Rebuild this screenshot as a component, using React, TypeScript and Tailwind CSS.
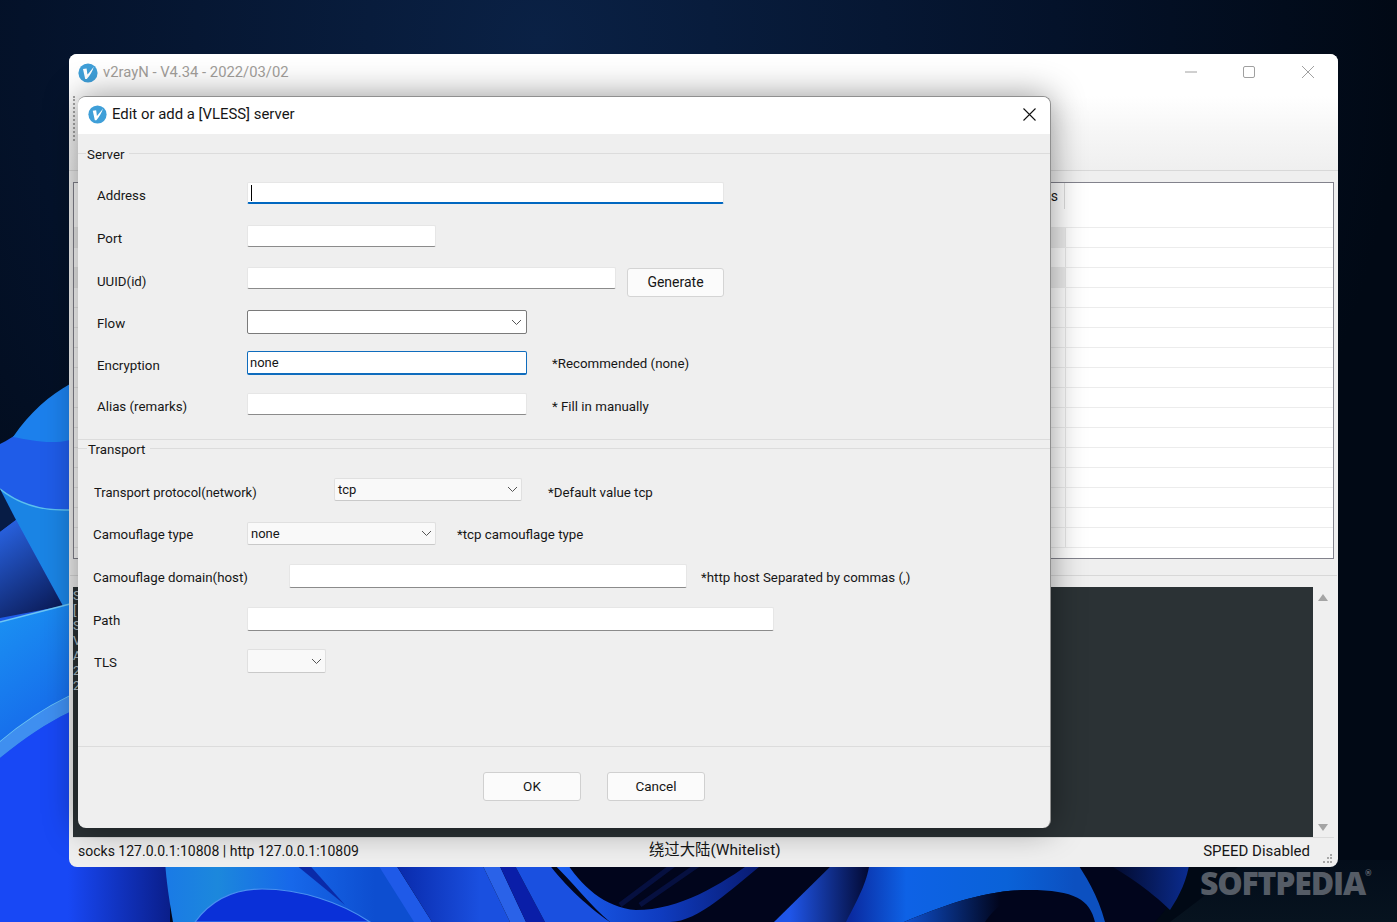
import type { ReactNode } from "react";

const FONT = "[font-family:'Roboto','Noto_Sans_CJK_SC',sans-serif]";

function Logo({ size = 20 }: { size?: number }) {
  return (
    <svg width={size} height={size} viewBox="0 0 20 20" className="shrink-0">
      <circle cx="10" cy="10" r="9.6" fill="#3f9fd8" />
      <path d="M5 6 L8.6 5.6 L9.4 11.6 C11.5 9.5 13.4 7 15.8 3.8 C14.6 8 12 12.6 8.8 16 L7.2 16 Z" fill="#fff" />
    </svg>
  );
}

function Chevron() {
  return (
    <svg width="11" height="7" viewBox="0 0 11 7" className="shrink-0">
      <path d="M1 1 L5.5 5.5 L10 1" fill="none" stroke="#555" strokeWidth="1" />
    </svg>
  );
}

function Wallpaper() {
  return (
    <svg className="absolute inset-0" width="1397" height="922" viewBox="0 0 1397 922">
      <defs>
        <radialGradient id="sky" cx="540" cy="40" r="860" gradientUnits="userSpaceOnUse">
          <stop offset="0" stopColor="#0a2145" />
          <stop offset="0.6" stopColor="#04122a" />
          <stop offset="1" stopColor="#010915" />
        </radialGradient>
        <linearGradient id="corner" x1="0" y1="860" x2="0" y2="922" gradientUnits="userSpaceOnUse">
          <stop offset="0" stopColor="#030d1a" />
          <stop offset="1" stopColor="#07131f" />
        </linearGradient>
        <linearGradient id="wedge" x1="0" y1="520" x2="60" y2="610" gradientUnits="userSpaceOnUse">
          <stop offset="0" stopColor="#2a66e8" />
          <stop offset="1" stopColor="#0a1a55" />
        </linearGradient>
        <linearGradient id="lower" x1="0" y1="620" x2="70" y2="720" gradientUnits="userSpaceOnUse">
          <stop offset="0" stopColor="#1a8ff2" />
          <stop offset="1" stopColor="#1668ea" />
        </linearGradient>
        <linearGradient id="floor" x1="0" y1="0" x2="170" y2="0" gradientUnits="userSpaceOnUse">
          <stop offset="0" stopColor="#1848f5" />
          <stop offset="0.4" stopColor="#1848f5" />
          <stop offset="1" stopColor="#0a1e8a" />
        </linearGradient>
        <linearGradient id="bandA" x1="165" y1="0" x2="375" y2="0" gradientUnits="userSpaceOnUse">
          <stop offset="0" stopColor="#1a7ae6" />
          <stop offset="0.25" stopColor="#1c88dc" />
          <stop offset="0.6" stopColor="#1768ea" />
          <stop offset="1" stopColor="#0d4ed0" />
        </linearGradient>
        <linearGradient id="bandC" x1="393" y1="0" x2="480" y2="0" gradientUnits="userSpaceOnUse">
          <stop offset="0" stopColor="#0828a8" />
          <stop offset="1" stopColor="#1a50e0" />
        </linearGradient>
        <linearGradient id="crest" x1="560" y1="0" x2="760" y2="0" gradientUnits="userSpaceOnUse">
          <stop offset="0" stopColor="#1a5ef0" />
          <stop offset="0.5" stopColor="#0f3cc0" />
          <stop offset="1" stopColor="#081a70" />
        </linearGradient>
        <linearGradient id="streak" x1="790" y1="0" x2="870" y2="0" gradientUnits="userSpaceOnUse">
          <stop offset="0" stopColor="#1f55e8" />
          <stop offset="1" stopColor="#020830" />
        </linearGradient>
        <linearGradient id="swell" x1="850" y1="0" x2="1075" y2="0" gradientUnits="userSpaceOnUse">
          <stop offset="0" stopColor="#0a2aa0" />
          <stop offset="0.25" stopColor="#0e62e6" />
          <stop offset="0.7" stopColor="#0a62d8" />
          <stop offset="1" stopColor="#0c50c0" />
        </linearGradient>
        <linearGradient id="swellLow" x1="904" y1="0" x2="1000" y2="0" gradientUnits="userSpaceOnUse">
          <stop offset="0" stopColor="#0e50d0" />
          <stop offset="1" stopColor="#01051c" />
        </linearGradient>
        <linearGradient id="sliver" x1="1100" y1="0" x2="1190" y2="0" gradientUnits="userSpaceOnUse">
          <stop offset="0" stopColor="#01051c" />
          <stop offset="1" stopColor="#0b2c90" />
        </linearGradient>
      </defs>
      <rect width="1397" height="922" fill="url(#sky)" />
      <path d="M1170 922 C1200 900 1225 880 1245 860 H1397 V922 Z" fill="url(#corner)" />
      {/* left side */}
      <path d="M0 444 C30 430 50 400 70 384 L70 922 L0 922 Z" fill="#1f5ce8" />
      <path d="M13 437 C30 412 50 395 70 384 L70 440 C50 445 30 440 13 437 Z" fill="#1c80ec" />
      <path d="M0 489 C20 505 45 511 70 510 L70 606 L63 606 L16 520 Z" fill="#1a84e4" />
      <path d="M0 489 C20 505 45 511 70 510" fill="none" stroke="#5cc0ee" strokeWidth="1.5" />
      <path d="M0 489 L16 520 L0 532 Z" fill="#071c45" />
      <path d="M16 520 L63 606 L0 618 L0 532 Z" fill="url(#wedge)" />
      <path d="M0 622 L70 604 L70 700 C45 712 20 728 0 742 Z" fill="url(#lower)" />
      <path d="M0 622 L70 604" stroke="#6cc6f4" strokeWidth="1.6" />
      <path d="M0 742 C20 725 45 708 70 696" fill="none" stroke="#6cc6f4" strokeWidth="1.4" />
      <path d="M0 758 C25 738 45 724 70 712 L70 696 C45 708 20 725 0 742 Z" fill="#3f8ff0" />
      <path d="M0 758 C25 738 45 724 70 712 L70 922 L0 922 Z" fill="#1848f5" />
      {/* bottom */}
      <path d="M60 860 H1190 C1185 885 1170 905 1155 922 H60 Z" fill="#01051c" />
      <rect x="0" y="860" width="170" height="62" fill="url(#floor)" />
      <path d="M165 860 C166 880 170 905 173 922 L420 922 L375 860 Z" fill="url(#bandA)" />
      <path d="M290 860 L305 860 L345 905 Z" fill="#0a2aa8" />
      <path d="M195 922 C215 895 240 889 262 889 C300 889 340 902 370 922 Z" fill="#0a30d8" stroke="#4a90f0" strokeWidth="1.2" />
      <path d="M375 860 L414 922 H432 L393 860 Z" fill="#1f5ae8" />
      <path d="M393 860 L432 922 L510 922 L480 860 Z" fill="url(#bandC)" />
      <path d="M480 860 L497 860 L526 922 L510 922 Z" fill="#2a62e8" />
      <path d="M497 860 L512 860 L545 922 H526 Z" fill="#0a1ea8" />
      <path d="M512 860 L546 860 C560 880 585 905 610 922 L545 922 Z" fill="#1a50e0" />
      <path d="M565 860 C580 885 605 908 636 910 C680 910 720 885 755 860 L768 860 C735 885 700 922 670 922 L610 922 C590 905 575 885 550 860 Z" fill="url(#crest)" />
      <path d="M620 905 L680 860 M640 905 L705 860" stroke="#061040" strokeWidth="5" />
      <path d="M837 860 L774 922 L880 922 L900 860 Z" fill="url(#streak)" />
      <path d="M870 860 H1075 C1085 875 1098 895 1105 922 H1095 C1090 900 1075 890 1029 890 C985 890 945 905 904 922 H846 C860 895 868 880 870 860 Z" fill="url(#swell)" />
      <path d="M904 922 C945 905 985 890 1029 890 C1000 900 990 915 985 922 Z" fill="url(#swellLow)" />
      <path d="M1100 860 H1190 C1187 880 1180 895 1170 910 C1150 890 1120 870 1100 860 Z" fill="url(#sliver)" />
    </svg>
  );
}

function Legend({ children, labelClass }: { children: ReactNode; labelClass: string }) {
  return (
    <div className="flex items-center h-[18px]">
      <div className={`${labelClass} h-px bg-[#dcdcdc]`} />
      <span className="px-[1px] pt-[4px]">{children}</span>
      <div className="flex-1 h-px bg-[#dcdcdc] ml-1" />
    </div>
  );
}

function Field({ className }: { className: string }) {
  return (
    <div className={`${className} bg-white border border-[#e6e6e6] border-b-[#8b8b8b] rounded-[2px] shrink-0`} />
  );
}

function Select({ className, value }: { className: string; value?: string }) {
  return (
    <div className={`${className} bg-[#f9f9f9] border border-[#e0e0e0] border-b-[#c9c9c9] rounded-[2px] flex items-center justify-between pl-[3px] pr-[3px] shrink-0`}>
      <span className="leading-none text-[13px]">{value}</span>
      <Chevron />
    </div>
  );
}

export default function App() {
  const rows = Array.from({ length: 16 });
  // only the first letters of the log stick out beside the dialog
  const logLines = ["S", "[", "S", "V", "A", "2", "2"];

  return (
    <div className={`relative w-[1397px] h-[922px] overflow-hidden text-[13.3px] text-[#161616] ${FONT}`}>
      <Wallpaper />

      {/* watermark */}
      <div className="absolute left-[1200px] top-[865px] flex items-start text-[#555c66] font-extrabold [font-family:'Open_Sans',sans-serif]">
        <span className="text-[32px] leading-[36px] tracking-[-1.2px]">SOFTPEDIA</span>
        <span className="text-[8px] leading-[16px]">®</span>
      </div>

      {/* main window */}
      <div className="absolute left-[69px] top-[54px] w-[1269px] h-[813px] rounded-[8px] overflow-hidden bg-[#efefef] flex flex-col">
        <div className="h-[42px] bg-white flex items-center pl-[9px] pb-[5px] shrink-0">
          <Logo size={20} />
          <span className="ml-[5px] text-[14.8px] text-[#a29e9a]">v2rayN - V4.34 - 2022/03/02</span>
          <div className="ml-auto flex items-center -mt-[2px]">
            <svg width="14" height="14" viewBox="0 0 14 14" className="mr-[44px]">
              <path d="M1 7 H13" stroke="#a0a0a0" strokeWidth="1" />
            </svg>
            <svg width="14" height="14" viewBox="0 0 14 14" className="mr-[45px]">
              <rect x="1.5" y="1.5" width="11" height="11" rx="1.5" fill="none" stroke="#a0a0a0" strokeWidth="1" />
            </svg>
            <svg width="14" height="14" viewBox="0 0 14 14" className="mr-[23px]">
              <path d="M1 1 L13 13 M13 1 L1 13" stroke="#a0a0a0" strokeWidth="1" />
            </svg>
          </div>
        </div>

        {/* toolbar */}
        <div className="h-[75px] bg-gradient-to-b from-white via-[#f6f6f6] to-[#efefef] border-b border-[#d8d8d8] shrink-0 pl-[4px]">
          <div className="w-[2px] h-[45px] border-l-2 border-dotted border-[#a8a8a8]" />
        </div>

        {/* server list */}
        <div className="mt-[11px] mx-[4px] h-[377px] shrink-0 bg-white border border-[#82828c] overflow-hidden">
          <div className="h-[45px] border-b border-[#ececec] flex">
            <div className="w-[991px] h-[26px] border-r border-[#dcdcdc] flex justify-end items-center pr-[6px] shrink-0">
              <span className="text-[14px]">ts</span>
            </div>
          </div>
          {rows.map((_, i) => (
            <div key={i} className="h-[20px] border-b border-[#ececec] flex">
              <div className={`w-[992px] border-r border-[#e8e8e8] ${i === 0 || i === 2 ? "bg-[#eeeeee]" : "bg-white"}`} />
            </div>
          ))}
        </div>

        <div className="mt-[3px] mx-[1px] h-[14px] border-b border-[#d8d8d8] shrink-0" />

        {/* log */}
        <div className="mt-[11px] h-[250px] flex shrink-0 pl-[4px]">
          <div className="w-[1240px] bg-[#2b3235] text-[#b9c7cf] text-[13px] leading-[15px] pt-[1px]">
            {logLines.map((line, i) => (
              <div key={i}>{line}</div>
            ))}
          </div>
          <div className="flex-1 flex flex-col items-center justify-between pt-[7px] pb-[6px] pr-[5px]">
            <svg width="10" height="7" viewBox="0 0 10 7"><path d="M5 0 L10 7 H0 Z" fill="#a4a4a4" /></svg>
            <svg width="10" height="7" viewBox="0 0 10 7"><path d="M0 0 H10 L5 7 Z" fill="#a4a4a4" /></svg>
          </div>
        </div>

        {/* status bar */}
        <div className="flex-1 mx-[4px] border-t border-[#dcdcdc] relative flex items-center text-[15px] pb-[3px] pl-[5px]">
          <span className="text-[14px]">socks 127.0.0.1:10808 | http 127.0.0.1:10809</span>
          <span className="ml-[290px] text-[15.4px]">绕过大陆(Whitelist)</span>
          <span className="ml-auto mr-[24px]">SPEED Disabled</span>
          <svg width="10" height="10" viewBox="0 0 10 10" className="absolute right-[2px] bottom-[4px]">
            <path d="M8 1h2v2H8zM5 4h2v2H5zM8 4h2v2H8zM1 8h2v2H1zM5 8h2v2H5zM8 8h2v2H8z" fill="#a8a8a8" />
          </svg>
        </div>
      </div>

      {/* dialog */}
      <div className="absolute left-[78px] top-[96px] w-[973px] h-[732px] rounded-[8px] overflow-hidden bg-[#efefef] border-[#8f8f8f] border-t border-r shadow-[0_0_34px_rgba(0,0,0,0.42)] flex flex-col">
        <div className="h-[37px] bg-white flex items-center pl-[10px] pr-[14px] pb-[2px] shrink-0">
          <Logo size={19} />
          <span className="ml-[5px] text-[14.9px]">Edit or add a [VLESS] server</span>
          <svg width="13" height="13" viewBox="0 0 13 13" className="ml-auto">
            <path d="M0.5 0.5 L12.5 12.5 M12.5 0.5 L0.5 12.5" stroke="#111" strokeWidth="1.1" />
          </svg>
        </div>

        {/* server section */}
        <div className="mt-[10px] shrink-0">
          <Legend labelClass="w-[8px]">Server</Legend>
        </div>

        <div className="mt-[20px] flex items-center h-[22px] pl-[19px] shrink-0">
          <span className="w-[150px] pt-[6px]">Address</span>
          <div className="relative w-[477px] h-[22px] bg-white border border-[#e6e6e6] border-b-2 border-b-[#0067c0] rounded-[2px]">
            <div className="absolute left-[3px] top-[2px] w-px h-[16px] bg-black" />
          </div>
        </div>

        <div className="mt-[21px] flex items-center h-[22px] pl-[19px] shrink-0">
          <span className="w-[150px] pt-[6px]">Port</span>
          <Field className="w-[189px] h-[22px]" />
        </div>

        <div className="mt-[20px] flex items-start h-[22px] pl-[19px] shrink-0">
          <span className="w-[150px] leading-[30px]">UUID(id)</span>
          <Field className="w-[369px] h-[22px]" />
          <button className="ml-[11px] w-[97px] h-[29px] mt-[1px] bg-[#fbfbfb] border border-[#d4d4d4] rounded-[3px] text-[14px] shrink-0">
            Generate
          </button>
        </div>

        <div className="mt-[21px] flex items-center h-[24px] pl-[19px] shrink-0">
          <span className="w-[150px] pt-[4px]">Flow</span>
          <div className="w-[280px] h-[24px] border border-[#7a7a7a] rounded-[2px] bg-white flex items-center justify-end pr-[4px]">
            <Chevron />
          </div>
        </div>

        <div className="mt-[17px] flex items-center h-[24px] pl-[19px] shrink-0">
          <span className="w-[150px] pt-[6px]">Encryption</span>
          <div className="w-[280px] h-[24px] bg-white border border-[#0f6cbd] border-b-2 rounded-[2px] flex items-center pl-[2px] text-[13px] shrink-0">
            none
          </div>
          <span className="ml-[25px] pt-[2px]">*Recommended (none)</span>
        </div>

        <div className="mt-[18px] flex items-center h-[22px] pl-[19px] shrink-0">
          <span className="w-[150px] pt-[6px]">Alias (remarks)</span>
          <Field className="w-[280px] h-[22px]" />
          <span className="ml-[25px] pt-[6px]">* Fill in manually</span>
        </div>

        <div className="mt-[24px] h-px bg-[#dcdcdc] shrink-0" />

        {/* transport section */}
        <div className="-mt-[1px] shrink-0">
          <Legend labelClass="w-[9px]">Transport</Legend>
        </div>

        <div className="mt-[21px] flex items-center h-[23px] pl-[16px] shrink-0">
          <span className="w-[240px] pt-[7px] text-[13px]">Transport protocol(network)</span>
          <Select className="w-[188px] h-[23px]" value="tcp" />
          <span className="ml-[26px] pt-[7px]">*Default value tcp</span>
        </div>

        <div className="mt-[21px] flex items-center h-[23px] pl-[15px] shrink-0">
          <span className="w-[154px] pt-[2px]">Camouflage type</span>
          <Select className="w-[189px] h-[23px]" value="none" />
          <span className="ml-[21px] pt-[2px]">*tcp camouflage type</span>
        </div>

        <div className="mt-[19px] flex items-center h-[24px] pl-[15px] shrink-0">
          <span className="w-[196px] pt-[4px]">Camouflage domain(host)</span>
          <Field className="w-[398px] h-[24px]" />
          <span className="ml-[14px] pt-[4px]">*http host Separated by commas (,)</span>
        </div>

        <div className="mt-[19px] flex items-center h-[24px] pl-[15px] shrink-0">
          <span className="w-[154px] pt-[4px]">Path</span>
          <Field className="w-[527px] h-[24px]" />
        </div>

        <div className="mt-[18px] flex items-center h-[24px] pl-[16px] shrink-0">
          <span className="w-[153px] pt-[4px]">TLS</span>
          <Select className="w-[79px] h-[24px]" />
        </div>

        {/* footer */}
        <div className="mt-[73px] h-[82px] border-t border-[#dcdcdc] flex gap-[26px] pt-[25px] pl-[405px] text-[13.5px] shrink-0">
          <button className="w-[98px] h-[29px] bg-[#fbfbfb] border border-[#d0d0d0] rounded-[3px]">OK</button>
          <button className="w-[98px] h-[29px] bg-[#fbfbfb] border border-[#d0d0d0] rounded-[3px]">Cancel</button>
        </div>
      </div>
    </div>
  );
}
